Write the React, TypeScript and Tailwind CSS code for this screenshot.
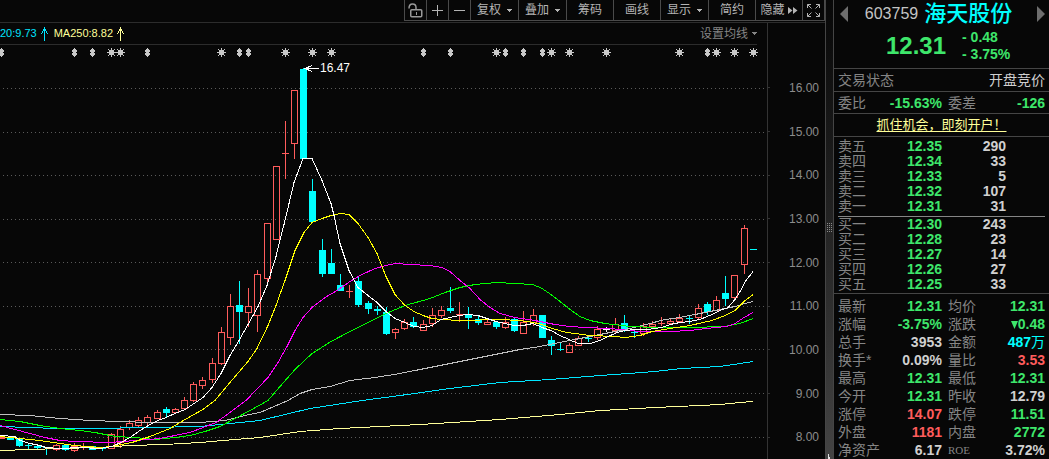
import { useState } from "react";
import type { ReactNode } from "react";

type Candle = {
    x: number;
    kind: "up" | "down" | "flat";
    body: [number, number];
    wick: [number, number];
};

const UP = "#ff5c5c";
const DOWN = "#00ffff";

// x, direction, body top, body bottom, high, low
const rawCandles: [number, string, number, number, number, number][] = [
    [1, "u", 437, 439, 437, 439],
    [10, "d", 437, 440, 437, 440],
    [19, "d", 439, 446, 439, 447],
    [28, "d", 445, 446, 444, 449],
    [37, "d", 446, 448, 446, 449],
    [46, "d", 447, 448, 447, 455],
    [56, "u", 445, 450, 444, 451],
    [65, "d", 445, 450, 444, 451],
    [74, "u", 446, 451, 443, 452],
    [83, "u", 446, 448, 443, 450],
    [92, "d", 446, 450, 446, 450],
    [102, "d", 448, 449, 447, 451],
    [111, "u", 434, 449, 433, 449],
    [120, "u", 429, 443, 426, 448],
    [129, "u", 423, 428, 420, 430],
    [138, "u", 420, 426, 417, 428],
    [147, "u", 417, 423, 415, 426],
    [157, "u", 412, 419, 410, 419],
    [166, "d", 409, 413, 407, 417],
    [175, "u", 409, 413, 408, 413],
    [184, "u", 400, 409, 397, 410],
    [193, "u", 384, 401, 382, 402],
    [202, "u", 380, 386, 377, 389],
    [212, "u", 363, 380, 358, 383],
    [221, "u", 332, 364, 327, 365],
    [230, "u", 306, 338, 294, 345],
    [239, "d", 305, 312, 281, 344],
    [248, "u", 306, 313, 288, 327],
    [257, "u", 274, 316, 270, 332],
    [267, "u", 223, 279, 223, 283],
    [276, "u", 166, 240, 166, 240],
    [285, "u", 153, 154, 121, 179],
    [294, "u", 90, 144, 90, 159],
    [303, "d", 69, 159, 68, 159],
    [312, "d", 191, 222, 179, 222],
    [322, "d", 250, 274, 239, 277],
    [331, "d", 263, 274, 249, 274],
    [340, "d", 285, 291, 274, 291],
    [349, "u", 291, 292, 285, 298],
    [358, "d", 281, 305, 277, 307],
    [368, "d", 303, 309, 301, 314],
    [377, "d", 309, 311, 306, 315],
    [386, "d", 312, 334, 307, 335],
    [395, "u", 329, 333, 328, 339],
    [404, "u", 322, 329, 319, 330],
    [413, "d", 322, 327, 317, 328],
    [423, "u", 324, 331, 320, 331],
    [432, "u", 315, 324, 308, 327],
    [441, "u", 310, 316, 306, 318],
    [450, "d", 308, 311, 287, 313],
    [459, "u", 314, 315, 302, 322],
    [468, "d", 314, 318, 307, 329],
    [478, "d", 319, 323, 316, 325],
    [487, "u", 322, 325, 320, 325],
    [496, "d", 322, 327, 321, 329],
    [505, "u", 322, 328, 317, 329],
    [514, "d", 319, 331, 318, 332],
    [523, "u", 322, 334, 311, 334],
    [533, "u", 315, 323, 309, 326],
    [542, "d", 315, 338, 315, 338],
    [551, "d", 340, 346, 336, 355],
    [560, "d", 349, 350, 343, 351],
    [569, "u", 345, 353, 343, 353],
    [578, "u", 338, 346, 336, 346],
    [588, "d", 338, 339, 336, 342],
    [597, "u", 329, 338, 326, 340],
    [606, "f", 329, 330, 327, 332],
    [615, "u", 324, 331, 318, 333],
    [624, "d", 323, 330, 315, 332],
    [634, "d", 332, 333, 331, 338],
    [643, "u", 326, 334, 323, 336],
    [652, "u", 324, 327, 321, 327],
    [661, "u", 323, 324, 317, 326],
    [670, "u", 321, 324, 318, 325],
    [679, "u", 318, 322, 314, 322],
    [689, "d", 318, 319, 315, 324],
    [698, "u", 308, 318, 304, 320],
    [707, "d", 304, 312, 302, 315],
    [716, "u", 300, 311, 296, 311],
    [725, "d", 293, 299, 276, 306],
    [734, "u", 275, 298, 275, 300],
    [744, "u", 228, 265, 225, 274],
    [753, "d", 249, 250, 249, 250],
];

const kinds: Record<string, Candle["kind"]> = { u: "up", d: "down", f: "flat" };

const candles: Candle[] = rawCandles.map(([x, k, top, bottom, high, low]) => ({
    x,
    kind: kinds[k],
    body: [top, bottom],
    wick: [high, low],
}));

const averages = [
    {
        name: "MA250",
        color: "#ffff99",
        points: "0,450 30,449 60,448 100,447 130,445 165,444 200,442 235,439 260,437 300,431 340,428 420,424 500,419 560,414 600,410 620,409 655,407 700,405 720,404 740,402 753,401",
    },
    {
        name: "MA120",
        color: "#00e5ff",
        points: "0,426 30,427 55,428 90,428 150,427 200,426 230,423 260,420 310,408 362,400 400,395 450,388 500,382 550,379 600,375 628,373 655,371 682,368 720,366 740,363 753,361",
    },
    {
        name: "MA60",
        color: "#c0c0c0",
        points: "0,414 30,415 60,418 90,420 120,421 150,422 200,422 225,420 245,415 260,412 288,400 300,393 312,389 330,386 350,380 375,377 400,373 420,369 440,365 460,361 480,357 500,353 520,349 540,346 580,338 605,333 630,328 650,323 665,319 680,317 700,313 715,310 735,306 745,303 753,301",
    },
    {
        name: "MA30",
        color: "#00ff00",
        points: "0,419 20,421 40,425 60,428 80,430 95,432 115,436 135,437 155,439 175,437 190,435 205,431 220,426 235,418 250,410 268,400 280,386 295,369 312,353 331,341 350,331 370,321 386,313 405,305 430,298 445,292 460,287 475,284 497,282 515,283 533,284 542,288 551,294 560,301 570,309 580,316 590,320 605,323 630,326 655,327 690,327 725,326 740,323 753,318",
    },
    {
        name: "MA20",
        color: "#ff00ff",
        points: "0,425 15,429 30,433 45,437 60,440 75,441 110,442 135,440 160,438 175,435 190,432 203,427 216,422 230,412 246,400 268,377 278,362 287,346 295,330 303,317 312,307 325,297 337,290 350,281 360,275 375,268 386,265 395,263 410,264 430,265 442,267 450,271 460,280 470,288 480,299 490,307 500,313 515,317 535,320 555,324 570,326 585,327 610,328 640,331 670,331 690,330 715,327 727,326 735,323 744,317 753,312",
    },
    {
        name: "MA10",
        color: "#ffff00",
        points: "0,436 20,438 40,440 60,443 75,445 100,447 112,446 121,444 132,442 141,439 150,436 160,432 170,428 180,422 192,415 203,409 215,400 230,382 248,361 257,348 268,325 276,305 285,280 295,250 304,232 312,222 322,218 331,215 340,213 349,214 358,223 368,237 377,253 386,276 395,294 405,305 414,311 423,315 432,318 441,319 460,320 500,319 520,320 533,322 542,324 552,328 567,332 590,335 615,336 625,337 640,335 652,331 670,328 690,325 712,320 725,315 735,310 744,301 753,294",
    },
    {
        name: "MA5",
        color: "#ffffff",
        points: "0,435 15,436 20,440 30,443 40,445 46,447 60,448 80,447 100,448 112,446 121,442 130,437 140,430 150,424 158,420 166,417 175,413 185,409 194,403 203,397 212,387 221,373 230,355 239,340 248,324 258,306 267,285 276,256 284,224 294,182 303,158 312,158 322,180 331,203 334,215 340,243 349,270 358,287 368,295 377,302 386,311 395,318 405,322 414,326 423,327 432,325 441,319 450,317 459,315 468,314 478,315 487,318 496,321 505,323 514,325 523,325 533,323 542,327 551,330 560,335 569,339 578,343 590,343 600,340 608,336 620,331 634,329 647,329 662,327 670,324 680,322 690,321 700,319 712,314 720,310 728,307 735,299 740,291 746,280 753,271",
    },
];

const gridLines = [88, 132, 175, 219, 262, 306, 349, 393, 437];
const axisLabels = ["16.00", "15.00", "14.00", "13.00", "12.00", "11.00", "10.00", "9.00", "8.00"];

const smallMarks = [1, 74, 92, 147, 239, 248, 423, 450, 505, 523, 542, 707];
const starMarks = [111, 120, 221, 285, 312, 331, 496, 551, 569, 606, 679, 716, 734, 753];

const asks = [
    ["卖五", "12.35", "290"],
    ["卖四", "12.34", "33"],
    ["卖三", "12.33", "5"],
    ["卖二", "12.32", "107"],
    ["卖一", "12.31", "31"],
];

const bids = [
    ["买一", "12.30", "243"],
    ["买二", "12.28", "23"],
    ["买三", "12.27", "14"],
    ["买四", "12.26", "27"],
    ["买五", "12.25", "33"],
];

const green = "text-[#3ee66b]";
const red = "text-[#ff5c5c]";
const plain = "text-[#d0d0d0]";

const details: [string, ReactNode, string, string, ReactNode, string][] = [
    ["最新", "12.31", green, "均价", "12.31", green],
    ["涨幅", "-3.75%", green, "涨跌", <Drop key="drop" />, green],
    ["总手", "3953", plain, "金额", <Amount key="amount" />, "text-[#00ffff]"],
    ["换手*", "0.09%", plain, "量比", "3.53", red],
    ["最高", "12.31", green, "最低", "12.31", green],
    ["今开", "12.31", green, "昨收", "12.79", plain],
    ["涨停", "14.07", red, "跌停", "11.51", green],
    ["外盘", "1181", red, "内盘", "2772", green],
    ["净资产", "6.17", plain, "ROE", "3.72%", plain],
];

function Drop() {
    return (
        <>
            <svg className="inline-block align-baseline" width="7" height="8" viewBox="0 0 7 8" aria-hidden="true">
                <path d="M0 0h7L3.5 8z" fill="currentColor" />
            </svg>
            0.48
        </>
    );
}

function Amount() {
    return (
        <>
            487<span className="font-normal">万</span>
        </>
    );
}

function Caret() {
    return (
        <svg width="5" height="3" viewBox="0 0 5 3" shapeRendering="crispEdges" aria-hidden="true">
            <path d="M0 0h5v1H0zM1 1h3v1H1zM2 2h1v1H2z" fill="currentColor" />
        </svg>
    );
}

function UpArrow() {
    return (
        <svg width="7" height="14" viewBox="0 0 7 14" shapeRendering="crispEdges" aria-hidden="true">
            <path d="M3 0h1v14H3zM2 2h1v2H2zM4 2h1v2H4zM1 4h1v2H1zM5 4h1v2H5zM0 6h1v1H0zM6 6h1v1H6z" fill="currentColor" />
        </svg>
    );
}

function ToolButton({ label, width, children }: { label?: string; width: string; children: ReactNode }) {
    return (
        <button
            type="button"
            aria-label={label}
            className={`${width} flex h-full items-center justify-center gap-1.5 border-l border-[#4a4a4a] whitespace-nowrap hover:bg-[#1c1c1c]`}
        >
            {children}
        </button>
    );
}

function Toolbar() {
    const [locked, setLocked] = useState(false);

    return (
        <div className="flex justify-end">
            <div className="flex h-[21px] border-r border-b border-[#4a4a4a] text-xs text-[#b4b4b4]">
                <button
                    type="button"
                    aria-label="锁定"
                    aria-pressed={locked}
                    onClick={() => setLocked(!locked)}
                    className="flex h-full w-[22px] items-center justify-center border-l border-[#4a4a4a]"
                >
                    <svg width="15" height="15" viewBox="0 0 15 15" fill="none" stroke="#9a9a9a" aria-hidden="true">
                        <rect x="2.75" y="6.75" width="11" height="7" rx="1" strokeWidth="1.5" />
                        <path d="M1 5.5C1 2.5 2.500 1 4.500 1S8 2.500 8 4.500V6.500" strokeWidth="1.5" />
                        <path d="M8.500 9v3" />
                    </svg>
                </button>
                <ToolButton label="放大" width="w-[22px]">
                    <svg width="11" height="11" viewBox="0 0 11 11" shapeRendering="crispEdges" aria-hidden="true">
                        <path d="M5 0h1v11H5zM0 5h11v1H0z" fill="currentColor" />
                    </svg>
                </ToolButton>
                <ToolButton label="缩小" width="w-[22px]">
                    <svg width="11" height="11" viewBox="0 0 11 11" shapeRendering="crispEdges" aria-hidden="true">
                        <path d="M0 5h11v1H0z" fill="currentColor" />
                    </svg>
                </ToolButton>
                <ToolButton width="w-12">复权<Caret /></ToolButton>
                <ToolButton width="w-12">叠加<Caret /></ToolButton>
                <ToolButton width="w-[47px]">筹码</ToolButton>
                <ToolButton width="w-[47px]">画线</ToolButton>
                <ToolButton width="w-12">显示<Caret /></ToolButton>
                <ToolButton width="w-[47px]">简约</ToolButton>
                <ToolButton width="w-[47px]">
                    <span className="flex items-center gap-[3px]">
                        隐藏
                        <svg width="10" height="7" viewBox="0 0 10 7" aria-hidden="true">
                            <path d="M0 0l4.500 3.500L0 7zM5 0l4.500 3.500L5 7z" fill="currentColor" />
                        </svg>
                    </span>
                </ToolButton>
                <ToolButton label="全屏" width="w-[22px]">
                    <svg width="13" height="13" viewBox="0 0 13 13" fill="none" stroke="currentColor" aria-hidden="true">
                        <path d="M.5 4V.5H4M9 .5h3.500V4M12.500 9v3.500H9M4 12.500H.5V9M.5.5l4 4M12.500.5l-4 4M12.500 12.500l-4-4M.5 12.500l4-4" />
                    </svg>
                </ToolButton>
            </div>
        </div>
    );
}

function CandleShape({ candle }: { candle: Candle }) {
    const { x, kind, body, wick } = candle;
    const height = body[1] - body[0];
    const color = kind === "up" ? UP : kind === "down" ? DOWN : "#ffffff";

    if (kind === "up" && height > 1) {
        return (
            <g fill={color}>
                <rect x={x} y={wick[0]} width={1} height={body[0] - wick[0]} />
                <rect x={x} y={body[1]} width={1} height={wick[1] - body[1]} />
                <rect x={x - 2.5} y={body[0] + 0.5} width={6} height={height - 1} fill="none" stroke={color} />
            </g>
        );
    }
    return (
        <g fill={color}>
            <rect x={x} y={wick[0]} width={1} height={wick[1] - wick[0]} />
            <rect x={x - 3} y={body[0]} width={7} height={height} />
        </g>
    );
}

function Chart() {
    return (
        <svg className="block h-auto w-full" viewBox="0 45 767 414" shapeRendering="crispEdges" role="img" aria-label="K线图">
            {gridLines.map((y) => (
                <line key={y} x1="3" x2="767" y1={y + 0.5} y2={y + 0.5} stroke="#5a5a5a" strokeDasharray="1 3" />
            ))}
            {smallMarks.map((x) => (
                <path
                    key={x}
                    transform={`translate(${x} 48)`}
                    d="M0 0h1v1H0zM-1 1h3v1h-3zM-2 2h5v2h-5zM-1 4h3v1h-3zM-2 5h5v2h-5zM-1 7h3v1h-3zM0 8h1v1H0z"
                    fill="#c8c8c8"
                />
            ))}
            {starMarks.map((x) => (
                <path
                    key={x}
                    transform={`translate(${x} 48)`}
                    d="M0 0h1v9H0zM-4 4h9v1h-9zM-1 2h3v5h-3zM-2 3h5v3h-5zM-3 1h1v1h-1zM3 1h1v1H3zM-3 7h1v1h-1zM3 7h1v1H3zM-2 2h1v1h-1zM2 2h1v1H2zM-2 6h1v1h-1zM2 6h1v1H2z"
                    fill="#c8c8c8"
                />
            ))}
            {candles.map((candle) => (
                <CandleShape key={candle.x} candle={candle} />
            ))}
            {averages.map((line) => (
                <polyline key={line.name} points={line.points} transform="translate(0 .5)" fill="none" stroke={line.color} />
            ))}
            <path d="M305 68.500h14M312 65.500l-7 3 7 3" fill="none" stroke="#ffffff" />
            <text x="320" y="72" fill="#ffffff" fontSize="12" className="font-['Liberation_Sans','Noto_Sans_CJK_SC',sans-serif]">
                16.47
            </text>
        </svg>
    );
}

function PriceAxis() {
    return (
        <div className="flex w-[58px] shrink-0 flex-col border-l border-[#333333] pt-[43px]">
            {axisLabels.map((label) => (
                <div key={label} className="flex flex-1 items-center justify-between pr-1.5 text-xs text-[#8c8c8c]">
                    <span className="h-px w-0.5 bg-[#333333]" />
                    {label}
                </div>
            ))}
        </div>
    );
}

function Splitter() {
    return (
        <div className="flex w-2 shrink-0 flex-col items-center border-l border-[#454545] bg-linear-to-b from-[#080808] to-[#444444]">
            <div className="flex flex-1 items-center">
                <svg width="5" height="9" viewBox="0 0 5 9" shapeRendering="crispEdges" aria-hidden="true">
                    {[0, 2, 4, 6, 8].map((y) => (
                        <path key={y} d={`M0 ${y}h1v1H0zM2 ${y}h1v1H2zM4 ${y}h1v1H4z`} fill="#8a8a8a" />
                    ))}
                </svg>
            </div>
            <svg width="3" height="5" viewBox="0 0 3 5" shapeRendering="crispEdges" aria-hidden="true">
                <path d="M0 0h1v5H0zM1 3h1v2H1z" fill="#e0e0e0" />
            </svg>
        </div>
    );
}

function BookRows({ rows }: { rows: string[][] }) {
    return (
        <table className="w-full table-fixed text-right text-sm leading-[15px]">
            <tbody>
                {rows.map(([label, price, volume]) => (
                    <tr key={label}>
                        <th scope="row" className="h-[15px] w-12 p-0 text-left font-normal text-[#858585]">{label}</th>
                        <td className="w-14 p-0 font-bold text-[#3ee66b]">{price}</td>
                        <td className="w-16 p-0 font-bold text-[#d0d0d0]">{volume}</td>
                        <td className="p-0" />
                    </tr>
                ))}
            </tbody>
        </table>
    );
}

function QuotePanel() {
    return (
        <aside className="w-54 shrink-0 border-l border-[#454545] text-sm">
            <div className="h-[68px] px-1">
                <div className="flex h-7 items-center justify-between pl-0.5">
                    <button type="button" aria-label="上一只">
                        <svg width="8" height="16" viewBox="0 0 8 16" aria-hidden="true">
                            <path d="M8 0v16L0 8z" fill="#6e6e6e" />
                        </svg>
                    </button>
                    <h1 className="flex items-center gap-1.5 pr-2 font-normal">
                        <span className="text-base text-[#c4c4c4]">603759</span>
                        <span className="text-[22px] leading-7 font-medium text-[#00ffff]">海天股份</span>
                    </h1>
                    <button type="button" aria-label="下一只">
                        <svg width="8" height="16" viewBox="0 0 8 16" aria-hidden="true">
                            <path d="M0 0v16l8-8z" fill="#6e6e6e" />
                        </svg>
                    </button>
                </div>
                <div className="flex items-center gap-4 pl-12 font-bold text-[#3ee66b]">
                    <span className="text-2xl leading-9">12.31</span>
                    <div className="leading-[17px]">
                        <p>- 0.48</p>
                        <p>- 3.75%</p>
                    </div>
                </div>
            </div>
            <div className="flex h-[23px] items-center justify-between border-t border-[#454545] px-1">
                <span className="text-[#858585]">交易状态</span>
                <span className="text-[#d0d0d0]">开盘竞价</span>
            </div>
            <div className="flex h-[22px] items-center border-t border-[#454545] px-1">
                <span className="text-[#858585]">委比</span>
                <span className="w-[76px] text-right font-bold text-[#3ee66b]">-15.63%</span>
                <span className="pl-1.5 text-[#858585]">委差</span>
                <span className="flex-1 text-right font-bold text-[#3ee66b]">-126</span>
            </div>
            <div className="flex h-[23px] items-center justify-center border-t border-[#454545]">
                <a href="#open" className="text-[13px] leading-[18px] text-[#ffff99] underline underline-offset-2">
                    抓住机会，即刻开户！
                </a>
            </div>
            <div className="border-t border-[#454545] px-1 pt-0.5 pb-px">
                <BookRows rows={asks} />
                <div className="mt-0.5 border-t border-[#858585]" />
                <BookRows rows={bids} />
            </div>
            <table className="w-full border-separate border-spacing-0 border-t border-[#454545] px-1 pt-[3px] leading-[18px]">
                <tbody>
                    {details.map(([label, value, tone, label2, value2, tone2]) => (
                        <tr key={label}>
                            <th scope="row" className="h-[18px] w-12 p-0 text-left font-normal whitespace-nowrap text-[#858585]">{label}</th>
                            <td className={`w-14 p-0 text-right font-bold ${tone}`}>{value}</td>
                            <th scope="row" className="w-9 p-0 pl-1.5 text-left font-normal text-[#858585]">
                                {label2 === "ROE" ? (
                                    <span className="block font-['Liberation_Serif',serif] text-[11px] leading-[18px]">{label2}</span>
                                ) : (
                                    label2
                                )}
                            </th>
                            <td className={`p-0 text-right font-bold whitespace-nowrap ${tone2}`}>{value2}</td>
                        </tr>
                    ))}
                </tbody>
            </table>
        </aside>
    );
}

export default function App() {
    return (
        <div className="flex min-h-screen overflow-hidden bg-[#070707] font-['Liberation_Sans','Noto_Sans_CJK_SC',sans-serif]">
            <main className="flex min-w-0 flex-1 flex-col">
                <Toolbar />
                <div className="mt-px flex flex-1 border-t border-[#2c2c2c]">
                    <div className="min-w-0 flex-1">
                        <div className="mr-2.5 flex h-[22px] items-center justify-between border-b border-[#2c2c2c]">
                            <div className="flex items-center text-[11px] whitespace-nowrap">
                                <span className="flex items-center gap-1 text-[#00e5ff]">20:9.73 <UpArrow /></span>
                                <span className="flex items-center gap-1 pl-1.5 text-[#ffff99]">MA250:8.82 <UpArrow /></span>
                            </div>
                            <button type="button" className="flex items-center gap-1 text-xs text-[#858585]">
                                设置均线 <Caret />
                            </button>
                        </div>
                        <Chart />
                    </div>
                    <PriceAxis />
                </div>
            </main>
            <Splitter />
            <QuotePanel />
        </div>
    );
}
